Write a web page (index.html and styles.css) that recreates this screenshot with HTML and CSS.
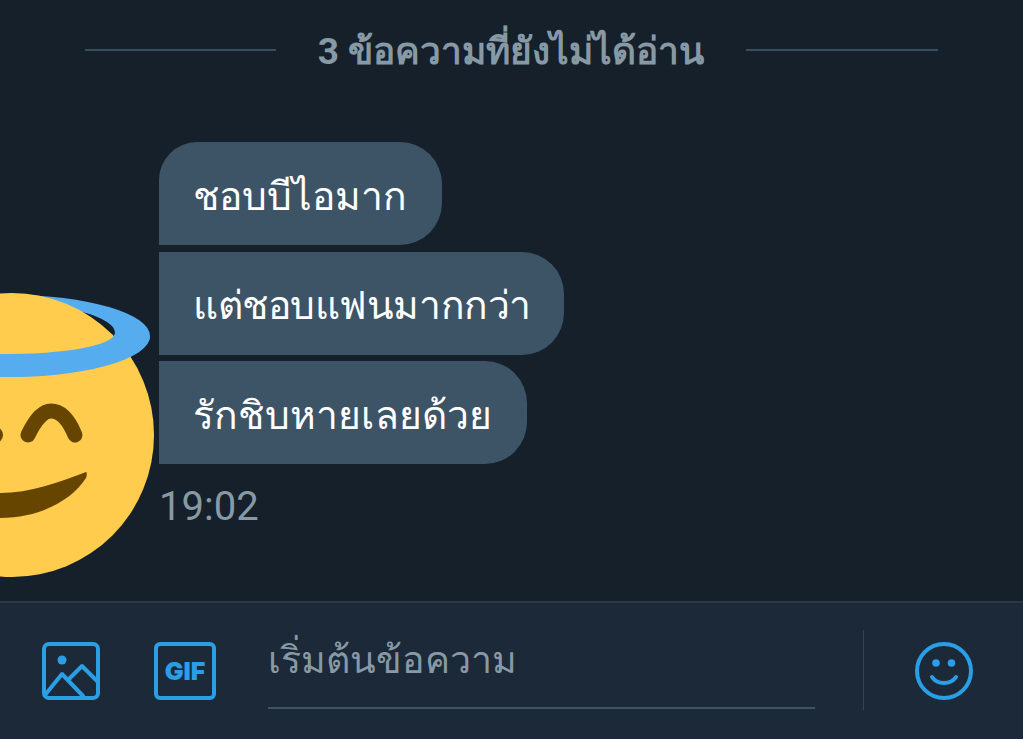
FILE: index.html
```html
<!DOCTYPE html>
<html lang="th">
<head>
<meta charset="utf-8">
<title>ข้อความ</title>
<link rel="stylesheet" href="styles.css">
</head>
<body>
<main class="screen">
  <section class="thread">
    <div class="unread">
      <span class="unread-line unread-line-left"></span>
      <span class="unread-text">3 ข้อความที่ยังไม่ได้อ่าน</span>
      <span class="unread-line unread-line-right"></span>
    </div>
    <div class="message-row">
      <svg class="avatar" viewBox="0 293 154 285" width="154" height="285" aria-hidden="true">
        <path class="halo" fill-rule="evenodd" d="M-130 336a140 41 0 1 0 280 0a140 41 0 1 0-280 0ZM-95 333A105 29 0 0 1 115 333A105 21 0 0 1 -95 333Z"/>
        <circle class="face" cx="12" cy="435" r="142"/>
        <path class="halo" d="M150 336A140 41 0 0 1 0 376.9L0 353.9A105 21 0 0 0 115 333Z"/>
        <path class="feature-line" d="M28 435C36 418 44 411 51 411C60 411 68 418 75 435"/>
        <circle class="feature" cx="-5" cy="435" r="8"/>
        <path class="feature" d="M86 472C60 482 30 493 0 493L0 518C40 518 72 500 86 478C87 476 87 472 86 472Z"/>
      </svg>
      <div class="messages">
        <p class="bubble bubble-first">ชอบบีไอมาก</p>
        <p class="bubble bubble-middle">แต่ชอบแฟนมากกว่า</p>
        <p class="bubble bubble-last">รักชิบหายเลยด้วย</p>
        <time class="stamp">19:02</time>
      </div>
    </div>
  </section>
  <footer class="composer">
    <svg class="icon icon-image" viewBox="0 0 58 58" width="58" height="58" aria-hidden="true">
      <rect class="icon-stroke" x="2" y="2" width="54" height="54" rx="5"/>
      <circle class="icon-fill" cx="20" cy="18" r="4.5"/>
      <path class="icon-stroke" d="M3 53L20 32L41 54M27 37L40 24L56 40"/>
    </svg>
    <div class="icon-gif"><span>GIF</span></div>
    <div class="field">
      <div class="placeholder">เริ่มต้นข้อความ</div>
    </div>
    <span class="separator"></span>
    <svg class="icon icon-smile" viewBox="0 0 58 58" width="58" height="58" aria-hidden="true">
      <circle class="icon-stroke" cx="29" cy="29" r="27"/>
      <circle class="icon-fill" cx="21" cy="21" r="3.8"/>
      <circle class="icon-fill" cx="36.5" cy="21" r="3.8"/>
      <path class="icon-stroke" d="M17 35C22 43 36 43 41 35"/>
    </svg>
  </footer>
</main>
</body>
</html>
```

FILE: styles.css
```css
* { box-sizing: border-box; }
html, body { margin: 0; height: 100%; }
body {
  background: #15202b;
  font-family: Roboto, "Noto Sans", "Liberation Sans", sans-serif;
  overflow: hidden;
}
.screen {
  width: 1023px;
  height: 739px;
  display: flex;
  flex-direction: column;
}
.thread { flex: 1; display: flex; flex-direction: column; }
.unread {
  display: flex;
  align-items: center;
  height: 100px;
  padding: 0 85px;
}
.unread-line { height: 2px; background: #3a4d5c; }
.unread-line-left { width: 191px; }
.unread-line-right { width: 192px; }
.unread-text {
  flex: 1;
  text-align: center;
  font-size: 37px;
  font-weight: 700;
  color: #8899a6;
  white-space: nowrap;
}
.message-row {
  display: flex;
  align-items: flex-end;
  gap: 5px;
  margin-top: 42px;
}
.avatar { flex: none; display: block; overflow: hidden; }
.halo { fill: #55acee; }
.face { fill: #ffcc4d; }
.feature { fill: #664500; }
.feature-line { fill: none; stroke: #664500; stroke-width: 15; stroke-linecap: round; }
.messages {
  display: flex;
  flex-direction: column;
  align-items: flex-start;
  gap: 6.5px;
  padding-bottom: 50px;
}
.bubble {
  margin: 0;
  height: 103px;
  display: flex;
  align-items: center;
  padding: 4px 0 0 34px;
  background: #3d5466;
  color: #fff;
  font-size: 39px;
  white-space: nowrap;
  border-radius: 0 42px 42px 0;
}
.bubble-first { width: 283px; border-top-left-radius: 38px; }
.bubble-middle { width: 405px; letter-spacing: -0.45px; }
.bubble-last { width: 368px; letter-spacing: 0.2px; }
.stamp { color: #8899a6; font-size: 40px; line-height: 42px; margin-top: 15px; }
.composer {
  height: 138px;
  display: flex;
  align-items: center;
  padding: 0 50px 0 42px;
  background: #1c2938;
  border-top: 2px solid #2a3945;
}
.icon { flex: none; display: block; }
.icon-stroke { fill: none; stroke: #2a9fe6; stroke-width: 4; stroke-linejoin: round; stroke-linecap: round; }
.icon-fill { fill: #2a9fe6; }
.icon-gif {
  flex: none;
  width: 62px;
  height: 58px;
  margin-left: 54px;
  border: 4px solid #2a9fe6;
  border-radius: 6px;
  display: flex;
  align-items: center;
  justify-content: center;
  color: #2a9fe6;
  font-family: Inter, Roboto, sans-serif;
  font-size: 25px;
  font-weight: 900;
}
.field {
  flex: none;
  width: 547px;
  height: 80px;
  margin: 26px 0 0 52px;
  border-bottom: 2px solid #3d5466;
  align-self: flex-start;
}
.placeholder { color: #8899a6; font-size: 37.5px; line-height: 62px; }
.separator { flex: none; width: 1px; height: 80px; margin: 27px 0 0 48px; background: #38444d; align-self: flex-start; }
.icon-smile { margin-left: 51px; }
```
